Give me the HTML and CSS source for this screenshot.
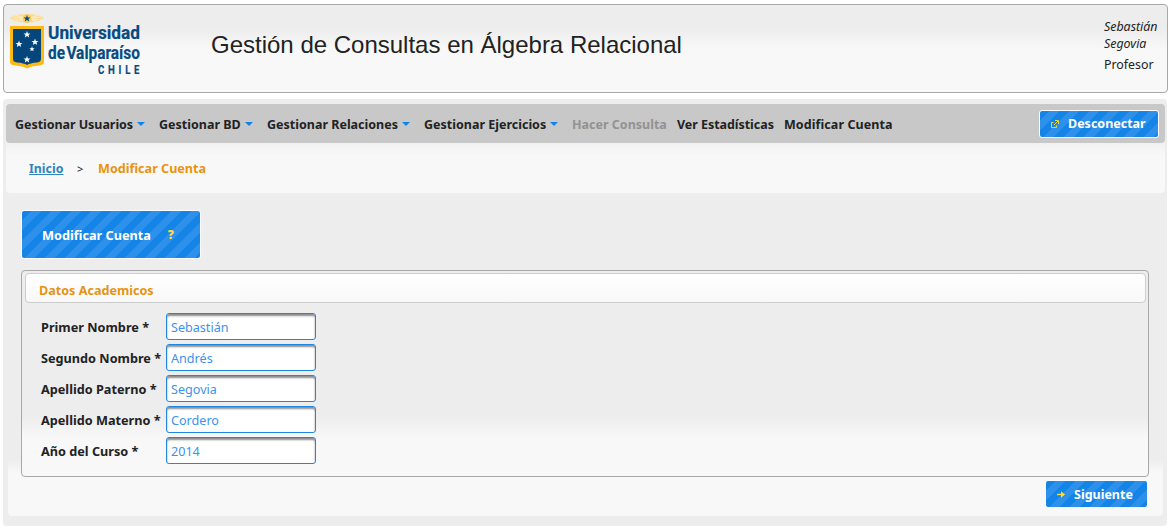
FILE: index.html
```html
<!DOCTYPE html>
<html lang="es">
<head>
<meta charset="utf-8">
<title>Gestión de Consultas en Álgebra Relacional</title>
<link rel="stylesheet" href="styles.css">
</head>
<body>
<header class="header">
  <svg class="logo" width="140" height="72" viewBox="0 0 140 72">
    <defs><path id="star" d="M0-3.600 .9-1.100H3.500L1.500.5 2.200 3 0 1.500-2.200 3-1.500.5-3.500-1.100H-.9Z"/></defs>
    <path d="M1 5Q4 1 18 1Q32 1 35 5Q32 9 18 10Q4 9 1 5Z" fill="#f9dc9a"/>
    <path d="M3 4 33 7M3 7 33 4M6 2 30 9M6 9 30 2" stroke="#fdf0d0" stroke-width=".7"/>
    <circle cx="18" cy="5.500" r="4.200" fill="#fbcb58"/>
    <use href="#star" x="18" y="5.500" fill="#064b83"/>
    <path d="M1 13H35V49Q35 52 30 52.500Q22 53 18 55.500Q14 53 6 52.500Q1 52 1 49Z" fill="#fdb913"/>
    <path d="M4 16H32V46Q32 49 28 49.500Q21 50 18 52Q15 50 8 49.500Q4 49 4 46Z" fill="#04467c"/>
    <g fill="#fff"><use href="#star" x="18" y="21.500"/><use href="#star" x="10" y="31"/><use href="#star" x="26" y="29"/><use href="#star" transform="translate(23 36) scale(.75)"/><use href="#star" x="18" y="46.500"/></g>
    <g class="logo-text">
      <text x="39" y="26" font-size="18.500" textLength="92" lengthAdjust="spacingAndGlyphs">Universidad</text>
      <text x="39" y="46" font-size="18.500" textLength="92" lengthAdjust="spacingAndGlyphs">de Valparaíso</text>
      <text font-size="12" transform="translate(89 60.800) scale(.8 1)" letter-spacing="4.700">CHILE</text>
    </g>
  </svg>
  <h1 class="title">Gestión de Consultas en Álgebra Relacional</h1>
  <div class="user"><em>Sebastián<br>Segovia</em><span>Profesor</span></div>
</header>
<main class="main">
  <nav class="menu">
    <a class="item usuarios">Gestionar Usuarios<i class="caret"></i></a>
    <a class="item bd">Gestionar BD<i class="caret"></i></a>
    <a class="item relaciones">Gestionar Relaciones<i class="caret"></i></a>
    <a class="item ejercicios">Gestionar Ejercicios<i class="caret"></i></a>
    <a class="item consulta">Hacer Consulta</a>
    <a class="item estadisticas">Ver Estadísticas</a>
    <a class="item cuenta">Modificar Cuenta</a>
    <button class="btn logout"><svg width="10" height="10" viewBox="0 0 10 10" fill="none" stroke="#ffde2e"><path d="M3.500 3.500H1.500V8.500H6.500V6.500M4 6 8 2M5 1.500H8.500V5" stroke-width=".9"/></svg><span>Desconectar</span></button>
  </nav>
  <div class="crumbs"><a class="home">Inicio</a><span class="sep">&gt;</span><span class="here">Modificar Cuenta</span></div>
  <section class="content">
    <button class="btn heading"><span>Modificar Cuenta</span><b class="help">?</b></button>
    <div class="panel">
      <h2 class="panel-title"><span>Datos Academicos</span></h2>
      <form class="form">
        <label>Primer Nombre *</label><input value="Sebastián">
        <label>Segundo Nombre *</label><input value="Andrés">
        <label>Apellido Paterno *</label><input value="Segovia">
        <label>Apellido Materno *</label><input value="Cordero">
        <label>Año del Curso *</label><input value="2014">
      </form>
    </div>
    <div class="actions"><button class="btn next"><svg width="10" height="10" viewBox="0 0 10 10" fill="none" stroke="#ffde2e"><path d="M1 5.500H7" stroke-width="1.400"/><path d="M5 2.300 9 5.500 5 8.700Z" fill="#ffde2e" stroke="none"/></svg><span>Siguiente</span></button></div>
  </section>
</main>
</body>
</html>
```
FILE: styles.css
```css
* { box-sizing: border-box; }
body { margin: 0; padding: 4px 4px 0 3px; height: 526px; overflow: hidden; background: #fff; color: #222; font: 13px "Noto Sans", "Open Sans", sans-serif; }
.header { display: flex; height: 89px; border: 1px solid #a8a8a8; border-radius: 4px; background: linear-gradient(#ededed 24px, #f8f8f8 44px); }
.logo { margin: 8px 0 0 5px; flex: none; overflow: visible; }
.logo-text { fill: #064b83; stroke: #064b83; stroke-width: .2px; word-spacing: -3px; font-family: Roboto, "Liberation Sans", Arial, sans-serif; font-weight: bold; }
.title { margin: 25px 0 0 62px; font: 24px/29px "Liberation Sans", Arial, sans-serif; white-space: nowrap; }
.user { margin: 13px 9px 0 auto; width: 54px; line-height: 17px; font-size: 12.4px; }
.user em, .user span { display: block; white-space: nowrap; }
.user span { margin-top: 4px; }
.main { margin: 6px 1px 0 0; padding: 5px 2px 0 3px; height: 427px; background: #ededed; border-radius: 4px; }
.menu { display: flex; align-items: center; height: 39px; padding: 0 6px 0 9px; background: #c8c8c8; border-radius: 4px; font-weight: bold; }
.item { display: flex; align-items: center; justify-content: space-between; white-space: nowrap; height: 20px; flex: none; font-size: 12.5px; padding-top: 2px; }
.usuarios { width: 131px; margin-right: 13px; letter-spacing: -.05px; }
.bd { width: 95px; margin-right: 13px; }
.relaciones { width: 144px; margin-right: 13px; }
.ejercicios { width: 135px; margin-right: 13px; }
.consulta { width: 105px; color: #929292; }
.estadisticas { width: 107px; letter-spacing: -.05px; }
.cuenta { width: 110px; letter-spacing: .08px; }
.caret { margin: 0 1px 2px 0; border: 4px solid transparent; border-top-color: #0b84ee; border-bottom: 0; }
.btn { display: flex; align-items: center; border: 1px solid #fcfdff; border-radius: 3px; padding: 0; color: #fff; font: bold 12.5px "Noto Sans", "Open Sans", sans-serif; white-space: nowrap; background: linear-gradient(135deg, #1484e6 25%, #2d90ea 25% 50%, #1484e6 50% 75%, #2d90ea 75%) 0 0 / 20px 20px; }
.logout { margin-left: auto; width: 120px; height: 28px; padding-left: 10px; }
.logout span { margin-left: 8px; }
.crumbs { display: flex; align-items: center; height: 50px; padding-left: 23px; border-radius: 0 0 4px 4px; background: linear-gradient(#f1f1f1, #f8f8f8 12px); }
.home { width: 48px; color: #2e83c0; font-weight: bold; text-decoration: underline; font-size: 12.4px; }
.sep { width: 21px; font-size: 11px; }
.here { color: #eb9409; font-weight: bold; font-size: 12.6px; }
.content { margin: 12px 2px 0; padding: 5px 14px 0 13px; height: 311px; border-radius: 4px; background: linear-gradient(#ededed 254px, #f8f8f8 268px); }
.heading { width: 180px; height: 49px; padding: 0 0 0 20px; font-size: 12.7px; }
.help { margin-left: 17px; color: #ffde2e; font-size: 12px; }
.panel { margin-top: 11px; height: 207px; padding: 2px 2px 0 3px; border: 1px solid #a8a8a8; border-radius: 4px; background: linear-gradient(#ededed 144px, #f8f8f8 166px); }
.panel-title { display: flex; align-items: center; height: 30px; margin: 0; padding: 4px 0 0 13px; border: 1px solid #cdcdcd; border-radius: 4px; background: linear-gradient(#fff, #f8f8f8); color: #e69413; font-size: 12.6px; }
.form { display: grid; grid-template-columns: 125px 150px; grid-auto-rows: 27px; row-gap: 4px; align-items: center; margin: 10px 0 0 16px; }
.form label { font-weight: bold; white-space: nowrap; font-size: 12.7px; }
.form input { width: 150px; height: 27px; padding: 3px 4px 1px; border: 1px solid #1f87e2; border-radius: 3px; background: #fff; color: #3c92ee; font: 12.6px "Noto Sans", "Open Sans", sans-serif; box-shadow: inset 0 2px 2px #8c8c8c; }
.actions { display: flex; justify-content: flex-end; margin: 3px 1px 0 0; }
.next { width: 103px; height: 28px; padding-left: 10px; }
.next span { margin-left: 8px; }
```
